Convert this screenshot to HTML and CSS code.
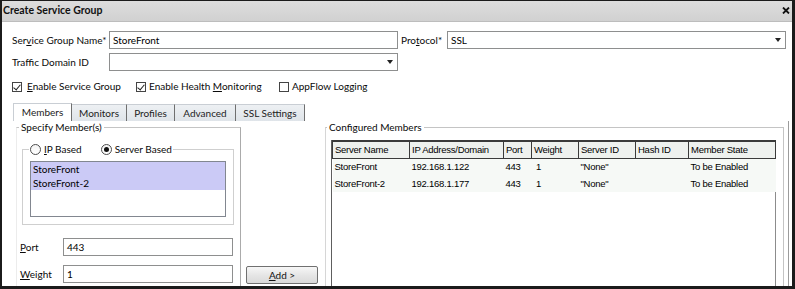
FILE: index.html
```html
<!DOCTYPE html>
<html lang="en">
<head>
<meta charset="UTF-8">
<meta name="viewport" content="width=device-width, initial-scale=1.0">
<title>Create Service Group</title>
<link rel="stylesheet" href="styles.css">
</head>
<body>
<div class="window">
    <div class="titlebar">
        <span class="title">Create Service Group</span>
        <svg class="close" width="8" height="7" viewBox="0 0 8 7">
            <path d="M1 0.5 L7 6.5 M7 0.5 L1 6.5" stroke="#111" stroke-width="1.8"/>
        </svg>
    </div>

    <div class="content">
        <div class="row">
            <span class="lbl lbl-name">Ser<u>v</u>ice Group Name*</span>
            <span class="input input-name">StoreFront</span>
            <span class="lbl lbl-proto">Pro<u>t</u>ocol*</span>
            <span class="input select select-proto">SSL<i class="arrow"></i></span>
        </div>
        <div class="row row-second">
            <span class="lbl lbl-name">Traffic Domain ID</span>
            <span class="input select input-name"><i class="arrow"></i></span>
        </div>
        <div class="row checks">
            <span class="check check-1"><span class="box on"></span><span><u>E</u>nable Service Group</span></span>
            <span class="check check-2"><span class="box on"></span><span>Enable Health <u>M</u>onitoring</span></span>
            <span class="check"><span class="box"></span><span>AppFlow Logging</span></span>
        </div>

        <div class="tabs">
            <span class="tab tab-members active">Members</span>
            <span class="tab tab-monitors">Monitors</span>
            <span class="tab tab-profiles">Profiles</span>
            <span class="tab tab-advanced">Advanced</span>
            <span class="tab tab-ssl">SSL Settings</span>
        </div>

        <div class="panel">
            <fieldset class="group spec">
                <legend>Specify Member(s)</legend>
                <fieldset class="group radios">
                    <legend>
                        <span class="radio"></span><span class="radio-text"><u>I</u>P Based</span>
                        <span class="radio on"></span><span class="radio-text">Server Based</span>
                    </legend>
                    <div class="listbox">
                        <div class="item selected">StoreFront</div>
                        <div class="item selected">StoreFront-2</div>
                    </div>
                </fieldset>
                <div class="field field-port">
                    <span class="field-lbl"><u>P</u>ort</span>
                    <span class="input field-input">443</span>
                </div>
                <div class="field field-weight">
                    <span class="field-lbl"><u>W</u>eight</span>
                    <span class="input field-input">1</span>
                </div>
            </fieldset>

            <div class="middle">
                <button class="btn-add"><u>A</u>dd &gt;</button>
            </div>

            <fieldset class="group conf">
                <legend>Configured Members</legend>
                <div class="grid">
                    <table>
                        <colgroup>
                            <col style="width:77px">
                            <col style="width:94px">
                            <col style="width:28px">
                            <col style="width:47px">
                            <col style="width:57px">
                            <col style="width:53px">
                            <col style="width:87px">
                        </colgroup>
                        <thead>
                            <tr>
                                <th>Server Name</th>
                                <th>IP Address/Domain</th>
                                <th>Port</th>
                                <th>Weight</th>
                                <th>Server ID</th>
                                <th>Hash ID</th>
                                <th>Member State</th>
                            </tr>
                        </thead>
                        <tbody>
                            <tr>
                                <td>StoreFront</td>
                                <td>192.168.1.122</td>
                                <td>443</td>
                                <td>&nbsp;1</td>
                                <td>"None"</td>
                                <td></td>
                                <td>To be Enabled</td>
                            </tr>
                            <tr>
                                <td>StoreFront-2</td>
                                <td>192.168.1.177</td>
                                <td>443</td>
                                <td>&nbsp;1</td>
                                <td>"None"</td>
                                <td></td>
                                <td>To be Enabled</td>
                            </tr>
                        </tbody>
                    </table>
                </div>
            </fieldset>
        </div>
    </div>
</div>
</body>
</html>
```
FILE: styles.css
```css
* {
    padding: 0;
    margin: 0;
    box-sizing: border-box;
}
body {
    width: 795px;
    height: 289px;
    overflow: hidden;
    background: #fff;
    color: #0a0a0a;
    font-family: Lato, "Open Sans", sans-serif;
    font-size: 10px;
    line-height: 13px;
}
u {
    text-decoration-thickness: 1px;
    text-underline-offset: 1px;
}

/* window frame */
.window {
    height: 289px;
    display: flex;
    flex-direction: column;
    border: 2px solid #1b1b1b;
    border-top-width: 1px;
    border-right-width: 3px;
    border-bottom-width: 3px;
    overflow: hidden;
}
.titlebar {
    flex: none;
    height: 21px;
    display: flex;
    align-items: center;
    justify-content: space-between;
    padding: 0 2px 1px 1px;
    background: linear-gradient(#dddddd, #d1d1d1);
    border-bottom: 1px solid #bdbdbd;
}
.title {
    font-weight: bold;
    font-size: 10.5px;
    color: #111;
}

.content {
    flex: 1;
    min-height: 0;
    display: flex;
    flex-direction: column;
    padding: 9px 3px 0 10px;
}

/* form rows */
.row {
    display: flex;
    align-items: center;
    height: 18px;
    margin-right: 3px;
}
.row-second {
    margin-top: 4px;
}
.lbl-name {
    flex: none;
    width: 97px;
}
.lbl-proto {
    flex: none;
    width: 46px;
    margin-left: 3px;
}
.input {
    display: flex;
    align-items: center;
    height: 18px;
    padding: 0 3px;
    border: 1px solid #8e8f8f;
    background: #fff;
    color: #000;
}
.input-name {
    flex: none;
    width: 289px;
}
.select-proto {
    flex: 1;
}
.arrow {
    margin-left: auto;
    margin-right: 1px;
    width: 0;
    height: 0;
    border-left: 3.5px solid transparent;
    border-right: 3.5px solid transparent;
    border-top: 4px solid #222;
}

/* checkboxes */
.checks {
    margin-top: 9px;
    height: 13px;
}
.check {
    display: flex;
    align-items: center;
}
.check-1 { width: 124px; }
.check-2 { width: 143px; }
.check-1 .box { margin-right: 5px; }
.box {
    position: relative;
    width: 10px;
    height: 10px;
    margin-right: 3px;
    border: 1px solid #444;
    background: #fff;
}
.box.on::after {
    content: "";
    position: absolute;
    left: 2px;
    top: 0;
    width: 3px;
    height: 6px;
    border-right: 1.5px solid #222;
    border-bottom: 1.5px solid #222;
    transform: rotate(40deg);
}

/* tabs */
.tabs {
    flex: none;
    display: flex;
    align-items: flex-end;
    height: 18px;
    margin: 10px 0 0 1px;
}
.tab {
    height: 17px;
    display: flex;
    align-items: center;
    justify-content: center;
    border-right: 1px solid #6f6f6f;
    border-top: 1px solid #c9ced4;
    background: linear-gradient(#edf0f3, #dfe4e9);
    color: #222;
}
.tab.active {
    height: 18px;
    background: #fff;
    border-left: 1px solid #c9ced4;
    border-top: 1px solid #c9ced4;
}
.tab-members { width: 59px; }
.tab-monitors { width: 55px; }
.tab-profiles { width: 48px; }
.tab-advanced { width: 61px; }
.tab-ssl { width: 69px; }

/* tab page */
.panel {
    flex: 1;
    min-height: 0;
    display: flex;
    align-items: flex-start;
    border-right: 1px solid #9c9c9c;
    overflow: hidden;
}
.group {
    border: 1px solid #c4c4c4;
}
.group > legend {
    padding: 0 2px;
    line-height: 13px;
}
.spec {
    flex: none;
    width: 225px;
    height: 200px;
    margin-left: 4px;
    padding: 0 5px 0 2px;
    border-left-color: #ececec;
    border-right-color: #ababab;
}
.radios {
    width: 212px;
    margin: 9px 0 0 3px;
    padding: 0 7px 7px 7px;
    border-color: #cfcfcf;
}
.radios > legend {
    display: flex;
    align-items: center;
    padding: 0 1px 0 1px;
    margin-left: -1px;
}
.radio {
    width: 11px;
    height: 11px;
    border: 1px solid #4d4d4d;
    border-radius: 50%;
    background: linear-gradient(#f4f4f4, #fff);
    display: flex;
    align-items: center;
    justify-content: center;
    margin-right: 3px;
}
.radio.on::after {
    content: "";
    width: 5px;
    height: 5px;
    border-radius: 50%;
    background: #111;
}
.radio-text {
    margin-right: 19px;
}
.radio-text:last-child {
    margin-right: 0;
}
.listbox {
    margin-top: 5px;
    width: 196px;
    height: 56px;
    border: 1px solid #828790;
}
.item {
    height: 14px;
    line-height: 14px;
    padding-left: 2px;
    color: #000;
}
.item.selected {
    background: #cbcaf6;
}

.field {
    display: flex;
    align-items: center;
    margin-left: 1px;
}
.field-port { margin-top: 13px; }
.field-weight { margin-top: 9px; }
.field-lbl {
    flex: none;
    width: 43px;
}
.field-input {
    width: 170px;
}

.middle {
    flex: none;
    width: 84px;
    padding: 145px 0 0 5px;
}
.btn-add {
    width: 72px;
    height: 18px;
    font-family: inherit;
    font-size: 10px;
    color: #111;
    border: 1px solid #707070;
    border-radius: 2px;
    background: linear-gradient(#f7f7f7, #e6e6e6 50%, #dadada);
}

.conf {
    flex: none;
    width: 459px;
    height: 200px;
    margin-right: 4px;
    padding: 0 7px 0 1px;
    border-left-color: #d6d6d6;
}
.grid {
    margin: 6px 0 0 4px;
    width: 445px;
    height: 180px;
    border-left: 1px solid #5e5e5e;
    border-right: 1px solid #8c8c8c;
    background: #fff;
}
table {
    width: 443px;
    table-layout: fixed;
    border-collapse: collapse;
    font-family: "Liberation Sans", Arial, sans-serif;
    font-size: 9.5px;
    letter-spacing: -0.25px;
    color: #000;
}
th {
    height: 17px;
    padding: 0 2px;
    text-align: left;
    font-weight: normal;
    background: #eef1ee;
    border: 1px solid #3a3a3a;
    border-top-width: 2px;
    white-space: nowrap;
    overflow: hidden;
}
td {
    height: 17px;
    padding: 0 2px;
    white-space: nowrap;
    background: #f6f9f6;
}
```
